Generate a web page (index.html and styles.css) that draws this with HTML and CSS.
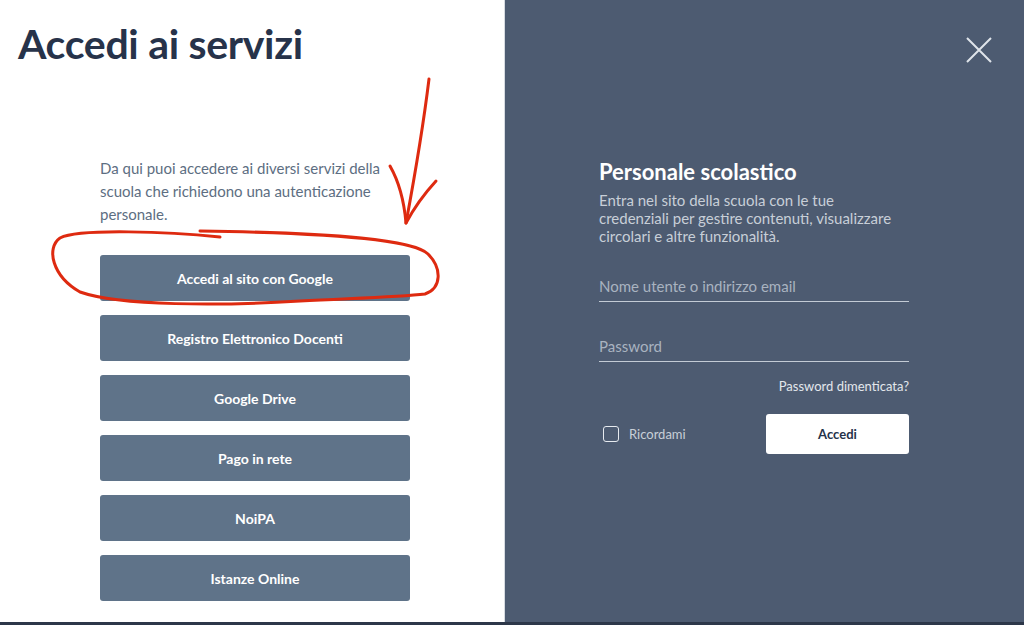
FILE: index.html
```html
<!DOCTYPE html>
<html lang="it">
<head>
<meta charset="utf-8">
<title>Accedi ai servizi</title>
<link rel="stylesheet" href="styles.css">
</head>
<body>
<div class="screen">
  <div class="panels">
    <section class="left">
      <h1 class="title">Accedi ai servizi</h1>
      <div class="services">
        <p class="intro">Da qui puoi accedere ai diversi servizi della scuola che richiedono una autenticazione personale.</p>
        <div class="btn-list">
          <a class="svc-btn">Accedi al sito con Google</a>
          <a class="svc-btn">Registro Elettronico Docenti</a>
          <a class="svc-btn">Google Drive</a>
          <a class="svc-btn">Pago in rete</a>
          <a class="svc-btn">NoiPA</a>
          <a class="svc-btn">Istanze Online</a>
        </div>
      </div>
    </section>
    <section class="right">
      <button class="close" aria-label="Chiudi">
        <svg width="26" height="26" viewBox="0 0 26 26"><path d="M1 1 L25 25 M25 1 L1 25" stroke="#dfe4ea" stroke-width="2" fill="none"/></svg>
      </button>
      <div class="login">
        <h2 class="login-title">Personale scolastico</h2>
        <p class="login-desc">Entra nel sito della scuola con le tue credenziali per gestire contenuti, visualizzare circolari e altre funzionalità.</p>
        <div class="field"><span class="placeholder">Nome utente o indirizzo email</span></div>
        <div class="field"><span class="placeholder">Password</span></div>
        <div class="forgot">Password dimenticata?</div>
        <div class="actions">
          <label class="remember"><span class="check"></span>Ricordami</label>
          <span class="submit">Accedi</span>
        </div>
      </div>
    </section>
  </div>
  <div class="bottom-bar"></div>
  <svg class="annot" width="1024" height="625" viewBox="0 0 1024 625">
    <g fill="none" stroke="#de2a10" stroke-width="3" stroke-linecap="round" stroke-linejoin="round">
      <path d="M429 79 C424 120, 414 180, 406 223"/>
      <path d="M390 166 C398 180, 404 200, 406 223 C414 208, 425 193, 436 181"/>
      <path d="M220 237 C170 232, 80 228, 60 238 C46 248, 52 276, 80 292 C120 306, 220 306, 300 301 C360 298, 400 297, 425 294 C442 288, 442 268, 428 254 C414 240, 340 233, 200 231"/>
    </g>
  </svg>
</div>
</body>
</html>
```
FILE: styles.css
```css
* { box-sizing: border-box; }
html, body { margin: 0; padding: 0; }
body {
  width: 1024px;
  height: 625px;
  overflow: hidden;
  font-family: Lato, "Open Sans", sans-serif;
  background: #fff;
}
.screen {
  position: relative;
  width: 1024px;
  height: 625px;
  display: flex;
  flex-direction: column;
}
.panels {
  display: flex;
  height: 622px;
}
.left {
  width: 505px;
  background: #fff;
  border-right: 1px solid #d6dbe1;
  display: flex;
  flex-direction: column;
}
.title {
  margin: 19px 0 0 18px;
  font-size: 41px;
  line-height: 50px;
  font-weight: 700;
  color: #27334a;
  letter-spacing: -0.3px;
}
.services {
  width: 310px;
  margin: 88px 0 0 100px;
}
.intro {
  margin: 0 0 29px;
  font-size: 15px;
  line-height: 23px;
  color: #5d6e82;
}
.btn-list {
  display: flex;
  flex-direction: column;
  gap: 14px;
}
.svc-btn {
  display: flex;
  align-items: center;
  justify-content: center;
  height: 46px;
  background: #5f7389;
  border-radius: 3px;
  color: #fff;
  font-size: 14px;
  font-weight: 700;
  text-decoration: none;
}
.right {
  position: relative;
  flex: 1;
  background: #4d5b71;
  padding: 158px 0 0 94px;
}
.close {
  position: absolute;
  top: 37px;
  right: 32px;
  width: 26px;
  height: 26px;
  padding: 0;
  border: 0;
  background: none;
  display: block;
}
.close svg { display: block; }
.login {
  width: 310px;
}
.login-title {
  margin: 0;
  font-size: 22px;
  line-height: 28px;
  font-weight: 700;
  color: #fff;
}
.login-desc {
  margin: 5px 0 0;
  max-width: 302px;
  font-size: 15px;
  line-height: 18px;
  color: #c8cfd8;
}
.field {
  height: 44px;
  border-bottom: 1px solid #c3cbd5;
  display: flex;
  align-items: flex-end;
  padding-bottom: 6px;
}
.field:first-of-type { margin-top: 13px; }
.field + .field { margin-top: 16px; }
.placeholder {
  font-size: 15px;
  color: #a9b3c0;
}
.forgot {
  margin-top: 16px;
  text-align: right;
  font-size: 13px;
  color: #e3e7ec;
}
.actions {
  margin-top: 20px;
  display: flex;
  align-items: center;
  justify-content: space-between;
}
.remember {
  display: flex;
  align-items: center;
  gap: 10px;
  padding-left: 4px;
  font-size: 13px;
  color: #c8cfd8;
}
.check {
  width: 16px;
  height: 16px;
  border: 1.5px solid #e6eaef;
  border-radius: 3px;
}
.submit {
  width: 143px;
  height: 40px;
  background: #fff;
  border-radius: 3px;
  display: flex;
  align-items: center;
  justify-content: center;
  font-size: 13px;
  font-weight: 700;
  color: #25324a;
}
.bottom-bar {
  height: 3px;
  background: #2d3749;
}
.annot {
  position: absolute;
  left: 0;
  top: 0;
  pointer-events: none;
}
```
